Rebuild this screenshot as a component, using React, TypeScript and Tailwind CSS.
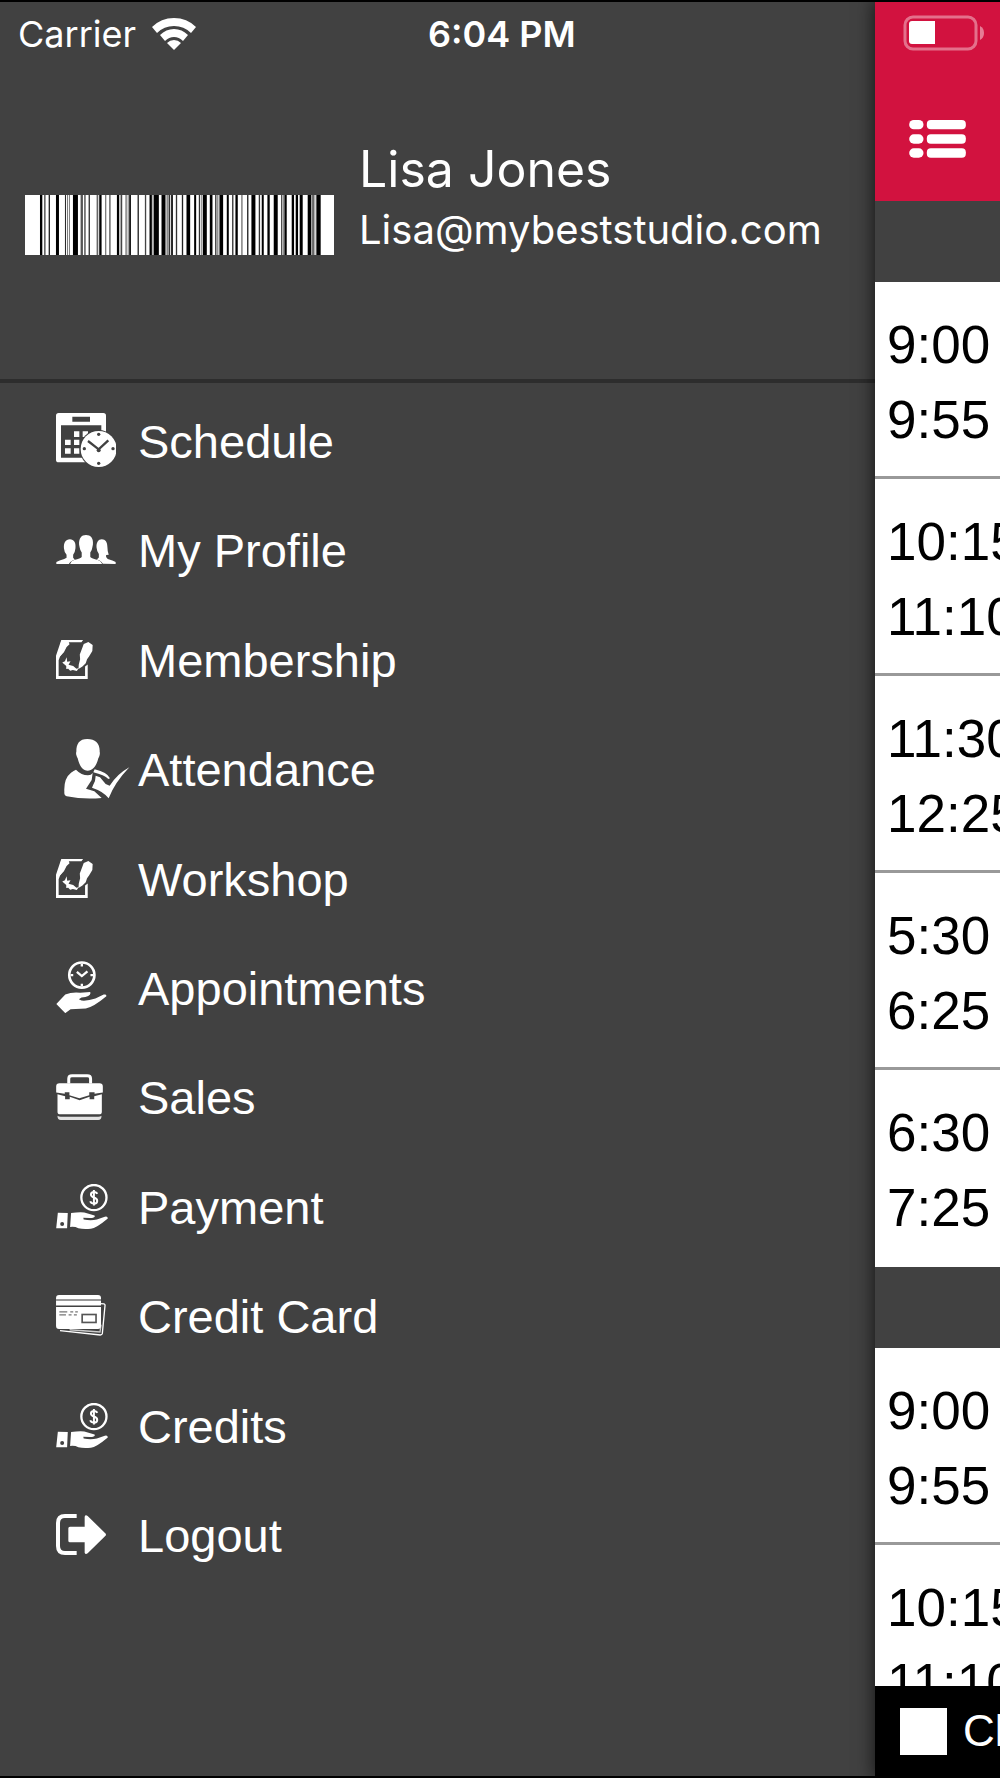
import type { ReactNode } from 'react';

// [x, width, shade] for each bar, three units to a pixel
const BARS: [number, number, string][] = [
  [45, 7, '#000'], [57, 5, '#666'], [71, 4, '#222'], [93, 9, '#000'], [120, 3, '#222'],
  [126, 3, '#777'], [132, 2, '#333'], [144, 15, '#000'], [167, 7, '#555'], [178, 4, '#444'],
  [191, 4, '#333'], [215, 5, '#666'], [223, 7, '#000'], [241, 3, '#555'], [253, 4, '#555'],
  [276, 7, '#000'], [287, 5, '#444'], [302, 3, '#444'], [308, 4, '#999'], [313, 5, '#000'],
  [338, 4, '#222'], [360, 4, '#444'], [374, 7, '#000'], [382, 5, '#aaa'], [387, 15, '#000'],
  [410, 12, '#000'], [425, 4, '#777'], [431, 5, '#333'], [439, 5, '#000'], [453, 4, '#333'],
  [471, 4, '#222'], [485, 11, '#000'], [508, 6, '#000'], [522, 4, '#333'], [529, 3, '#888'],
  [534, 12, '#000'], [555, 8, '#000'], [571, 4, '#333'], [577, 4, '#888'], [584, 11, '#000'],
  [606, 6, '#000'], [622, 4, '#333'], [632, 7, '#000'], [650, 3, '#444'], [667, 4, '#222'],
  [680, 12, '#000'], [702, 4, '#333'], [711, 6, '#000'], [728, 7, '#000'], [747, 12, '#000'],
  [769, 4, '#444'], [775, 3, '#888'], [779, 7, '#000'], [801, 7, '#000'], [813, 7, '#000'],
  [825, 9, '#000'], [849, 11, '#000'], [863, 4, '#222'], [869, 3, '#888'], [875, 13, '#000'],
];

const DARK = '#414141';

function Barcode() {
  return (
    <svg viewBox="0 0 928 180" preserveAspectRatio="none" className="h-[60px] w-[309px] shrink-0" role="img" aria-label="Member barcode">
      <rect width="928" height="180" fill="#fff" />
      {BARS.map(([x, w, shade]) => (
        <rect key={x} x={x} width={w} height="180" fill={shade} />
      ))}
    </svg>
  );
}

function ScheduleIcon() {
  return (
    <svg viewBox="0 0 180 162" className="h-[54px] w-[60px]" fill="#fff">
      <path fillRule="evenodd" d="M8 0h134q8 0 8 8v132q0 8-8 8H8q-8 0-8-8V8q0-8 8-8zM49 11v15h53V11zM15 37v97h121V37z" />
      <path d="M54 55h16v17H54zM80 55h16v17H80zM27 80h17v16H27zM54 80h16v16H54zM27 106h17v16H27zM54 106h16v16H54z" />
      <circle cx="128" cy="108" r="57" fill={DARK} />
      <circle cx="128" cy="108" r="54" />
      <path d="M96 84l32 25 29-27" fill="none" stroke={DARK} strokeWidth="7" />
      <g fill={DARK}>
        <circle cx="128" cy="112" r="6" />
        <circle cx="128" cy="64" r="5" />
        <circle cx="128" cy="151" r="5" />
        <circle cx="85" cy="107" r="5" />
        <circle cx="171" cy="107" r="5" />
      </g>
    </svg>
  );
}

function ProfileIcon() {
  return (
    <svg viewBox="0 0 180 88" className="h-[29px] w-[60px]" fill="#fff">
      <path d="M0 88v-6q8-5 24-9l7-4V60q-7-8-8-20c-1-16 5-27 18-27s19 11 17 27q-1 12-7 20v9l5 6q-14 4-18 13z" />
      <path d="M180 88v-6q-8-5-24-9l-5-6v-6l8-1q-4-9-4-23c0-15-6-24-17-24s-17 10-16 25q1 12 7 20v10l-6 6q14 4 18 13z" />
      <path d="M42 88q2-9 12-12 20-5 23-9V53q-5-6-6-14l-2-10C68 10 76 0 90 0s23 9 21 29l-2 10q-1 9-6 14v14q4 5 23 9 10 3 13 12z" />
    </svg>
  );
}

function DocumentIcon() {
  return (
    <svg viewBox="0 0 112 118" className="h-[39px] w-[37px]" fill="#fff">
      <path d="M16 0h66l-5 7H38l-6 12-20 32-4 10v48h80V80l8-6v44H0V48z" />
      <path d="M16 2h21l4 11-9 8-8 16-10 11-10 5z" />
      <path d="M84 12l14-6 13 9-1 18-10 17-6 8-4 12-10 10-12 8 1-14 4-16-1-14z" />
      <path d="M32 52l2 14 10-2-6 11 14 4 10 8 7-2-6 9-12-3-8 2-6-6-6 1v-9l-12-11 8-4z" />
    </svg>
  );
}

function AttendanceIcon() {
  return (
    <svg viewBox="-24 0 222 180" className="h-[60px] w-[74px]" fill="#fff">
      <path d="M70 0c24 0 38 14 37 38 2 7-1 14-4 20-5 21-16 37-32 37S46 79 41 58c-4-8-6-14-4-20C37 14 46 0 70 0z" />
      <path d="M36 92q16 17 36 17 10 0 14-7l-3 21-17 26 25 8 22 20q-54 5-105-5-8-2-7-14-2-40 20-57 8-6 15-9z" />
      <path d="M92 91q38 9 46 27l-5 2q-12-12-45-20z" />
      <path d="M95 110l13 5 17 20 12 5q24-36 59-55-44 46-62 93-14-20-50-32 4-10 9-20z" />
    </svg>
  );
}

function AppointmentIcon() {
  return (
    <svg viewBox="0 0 154 156" className="h-[52px] w-[51px]" fill="#fff">
      <circle cx="78" cy="42" r="38" fill="none" stroke="#fff" strokeWidth="8" />
      <path d="M78 8v8M78 68v8M44 42h8M104 42h8M63 32l15 13 17-14" fill="none" stroke="#fff" strokeWidth="7" />
      <path d="M1 129l27-28q20-9 45-6l30-2q6 12-26 17l-8 5 8 4q18 2 42-6l25-12q9-2 8 5-38 32-62 37l-46 2-16 12z" />
    </svg>
  );
}

function SalesIcon() {
  return (
    <svg viewBox="0 0 141 139" className="h-[46px] w-[47px]" fill="#fff">
      <path d="M38 29V14q0-9 10-9h46q10 0 10 9v15" fill="none" stroke="#fff" strokeWidth="9" />
      <path d="M10 28h121q10 0 10 10v18l-25 4v-5h-16v9l-30 9-30-9v-9H26v5L0 56V38q0-10 10-10z" />
      <path d="M4 61l23 6v9h14v-7l30 10 30-10v7h14v-9l23-6v53q0 8-8 8H12q-8 0-8-8z" />
      <path d="M4 126q4 3 10 3h113q6 0 10-3 0 13-10 13H14q-10 0-10-13z" opacity=".85" />
    </svg>
  );
}

function MoneyHandIcon() {
  return (
    <svg viewBox="0 0 156 136" className="h-[45px] w-[52px]" fill="#fff">
      <circle cx="114" cy="41" r="38" fill="none" stroke="#fff" strokeWidth="7" />
      <path d="M124 30q-2-6-10-6-9 0-9 8 0 6 9 9 10 3 10 10 0 8-10 8-9 0-11-7M114 18v47" fill="none" stroke="#fff" strokeWidth="6" />
      <path fillRule="evenodd" d="M5 87l30 1-2 46H0zM18 115a5 5 0 100 12 5 5 0 000-12z" />
      <path d="M45 88q25-4 40-2l31 9q4 7-14 8l-20-1 1 5q22 5 40 0l24-8q9-2 9 5-36 30-51 31-22 2-38-1-11-6-25-4z" />
    </svg>
  );
}

function CreditCardIcon() {
  return (
    <svg viewBox="0 0 151 124" className="h-[41px] w-[50px]" fill="#fff">
      <path d="M134 26l11 1q4 1 3 6l-8 84q-1 4-6 4L12 108" fill="none" stroke="#fff" strokeWidth="4" />
      <path d="M136 90l-3 22-92-7" fill="none" stroke="#ccc" strokeWidth="4" />
      <rect width="136" height="103" rx="9" />
      <path d="M0 15h136" stroke="#999" strokeWidth="6" />
      <path d="M0 34h136" stroke={DARK} strokeWidth="4" />
      <path d="M10 51h24M43 51h9M58 51h8M10 60h20M38 60h9M54 60h9" stroke="#777" strokeWidth="4" />
      <rect x="79" y="59" width="42" height="24" fill="none" stroke="#555" strokeWidth="5" />
    </svg>
  );
}

function LogoutIcon() {
  return (
    <svg viewBox="0 0 150 123" className="h-[41px] w-[50px]" fill="#fff">
      <path d="M62 6H27Q6 6 6 27v69q0 21 21 21h35" fill="none" stroke="#fff" strokeWidth="12" />
      <path d="M42 38h44V8q2-7 9-2l52 51q6 5 0 10l-52 51q-7 5-9-2V85H42q-5 0-5-5V43q0-5 5-5z" />
    </svg>
  );
}

function WifiIcon() {
  return (
    <svg viewBox="0 0 44 32" className="h-8 w-11" fill="#fff">
      <path d="M22 0Q35 0 44 9l-5 6Q32 8 22 8T5 15L0 9Q9 0 22 0z" />
      <path d="M22 11q8 0 14 6l-5 6q-4-4-9-4t-9 4l-5-6q6-6 14-6z" />
      <path d="M22 22q4 0 7 3l-7 7-7-7q3-3 7-3z" />
    </svg>
  );
}

function BatteryIcon() {
  return (
    <svg viewBox="0 0 82 36" className="h-9 w-[82px]">
      <rect x="2" y="2" width="71" height="32" rx="8" fill="none" stroke="#fff" strokeOpacity=".4" strokeWidth="3" />
      <path d="M9 6h23v23H9q-3 0-3-3V9q0-3 3-3z" fill="#fff" />
      <path d="M77 11q4 2 4 7t-4 7z" fill="#fff" fillOpacity=".45" />
    </svg>
  );
}

function ListIcon() {
  return (
    <svg viewBox="0 0 170 114" className="h-[38px] w-[57px]" fill="#fff">
      {[0, 43, 85].map(y => (
        <g key={y}>
          <rect y={y} width="43" height="28" rx="14" />
          <rect x="53" y={y} width="117" height="28" rx="12" />
        </g>
      ))}
    </svg>
  );
}

const MENU: { label: string; icon: ReactNode }[] = [
  { label: 'Schedule', icon: <ScheduleIcon /> },
  { label: 'My Profile', icon: <ProfileIcon /> },
  { label: 'Membership', icon: <DocumentIcon /> },
  { label: 'Attendance', icon: <AttendanceIcon /> },
  { label: 'Workshop', icon: <DocumentIcon /> },
  { label: 'Appointments', icon: <AppointmentIcon /> },
  { label: 'Sales', icon: <SalesIcon /> },
  { label: 'Payment', icon: <MoneyHandIcon /> },
  { label: 'Credit Card', icon: <CreditCardIcon /> },
  { label: 'Credits', icon: <MoneyHandIcon /> },
  { label: 'Logout', icon: <LogoutIcon /> },
];

const DAYS = [
  [['9:00', '9:55'], ['10:15', '11:10'], ['11:30', '12:25'], ['5:30', '6:25'], ['6:30', '7:25']],
  [['9:00', '9:55'], ['10:15', '11:10']],
];

function Drawer() {
  return (
    <aside className="flex min-w-0 flex-1 flex-col text-white">
      <div className="flex h-16 items-center pl-[18px] font-['Inter',sans-serif] text-[36px]">
        <div className="flex w-[410px] items-center gap-4">
          <span>Carrier</span>
          <WifiIcon />
        </div>
        <span className="font-semibold">6:04 PM</span>
      </div>

      <header className="flex h-[317px] items-start border-b-4 border-[#2d2d2d] pl-[25px] pt-[70px] font-['Inter',sans-serif]">
        <div className="pt-[59px]">
          <Barcode />
        </div>
        <div className="pl-[25px]">
          <h1 className="text-[50px] leading-[66px]">Lisa Jones</h1>
          <p className="text-[40px] leading-[56px]">Lisa@mybeststudio.com</p>
        </div>
      </header>

      <nav className="flex flex-1 pb-[185px] pt-1">
        <ul className="flex flex-1 flex-col">
          {MENU.map(item => (
            <li key={item.label} className="flex flex-1">
              <a href="#" className="flex flex-1 items-center pl-14 text-[47px] leading-[56px]">
                <span className="w-[82px] shrink-0 pb-[3px]">{item.icon}</span>
                {item.label}
              </a>
            </li>
          ))}
        </ul>
      </nav>
    </aside>
  );
}

function SchedulePanel() {
  return (
    <main className="flex w-1/8 shrink-0 flex-col overflow-hidden bg-[#414141] shadow-[0_0_16px_2px_rgba(0,0,0,0.6)]">
      <header className="flex h-[199px] shrink-0 flex-col items-start bg-[#d2123f] pt-[13px]">
        <div className="pl-7">
          <BatteryIcon />
        </div>
        <button type="button" aria-label="Toggle menu" className="mt-[69px] pl-[34px]">
          <ListIcon />
        </button>
      </header>

      <div className="min-h-0 flex-1 overflow-hidden">
        {DAYS.map((classes, day) => (
          <section key={day} className="pt-[81px]">
            <ul className="divide-y-3 divide-[#999] bg-white">
              {classes.map(([start, end]) => (
                <li key={start} className="h-[197px] whitespace-nowrap pl-3 pt-[25px] text-[53px] leading-[75px] text-black">
                  <div>{start}</div>
                  <div>{end}</div>
                </li>
              ))}
            </ul>
          </section>
        ))}
      </div>

      <footer className="flex h-[90px] shrink-0 items-center bg-black">
        <label className="flex items-center gap-4 whitespace-nowrap pl-[25px] text-[44px] text-white">
          <input type="checkbox" className="size-[47px] shrink-0 appearance-none bg-white" />
          Cl
        </label>
      </footer>
    </main>
  );
}

export default function App() {
  return (
    <div className="flex h-screen overflow-hidden border-y-2 border-black bg-[#414141] font-['Liberation_Sans',Arial,sans-serif]">
      <Drawer />
      <SchedulePanel />
    </div>
  );
}
